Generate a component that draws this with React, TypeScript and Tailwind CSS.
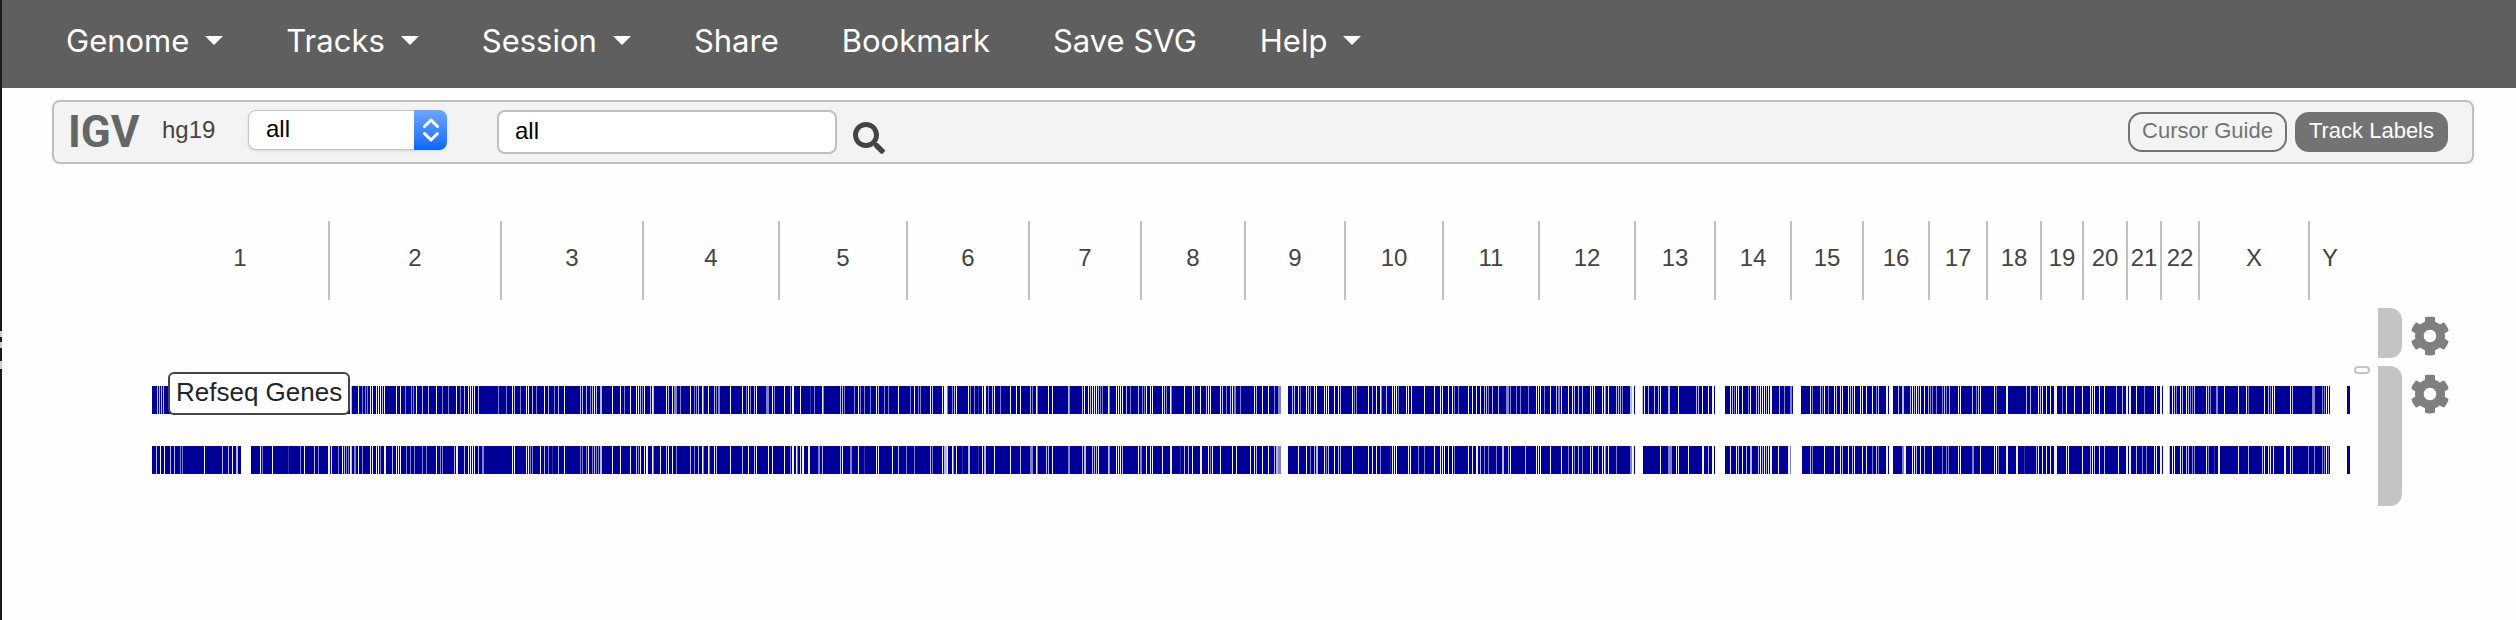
import { FaCog, FaSearch } from "react-icons/fa";

type Tile = [origin: number, marks: string];

const CHROMOSOMES: [name: string, span: number][] = [
  ["1", 178], ["2", 172], ["3", 142], ["4", 136], ["5", 128], ["6", 122],
  ["7", 112], ["8", 104], ["9", 100], ["10", 98], ["11", 96], ["12", 96],
  ["13", 80], ["14", 76], ["15", 72], ["16", 66], ["17", 58], ["18", 54],
  ["19", 42], ["20", 44], ["21", 34], ["22", 38], ["X", 110], ["Y", 40],
];

const AXIS_START = 152;
const AXIS_LENGTH = 2198;

// Gene deserts. Each mark is offset + strength (w, l, g, f) + optional width.
const STRENGTH: Record<string, number> = { w: 0.95, l: 0.72, g: 0.5, f: 0.2 };

const FORWARD: Tile[] = [
  [0, "157l 159l 161l 163l 350w 351l 358w 362g 365g 367g 370w 372w 376w 378w 380w 382l 384w 396w 400w 405g 411g 413g 416w 422l 428l 436w 442g 448g 456w 460g 464l 468w 470w 472w 474w 478l 498g"],
  [500, "6g 12w 14l 20g 26w 28w 32l 36g 44w 48l 54g 58l 64w 80l 82l 86l 90g 92l 94w 96l 100l2 112w 120w 124g 130w 136w 138w 140l 142g 144w 150l 152w 153l 166w 168l 172w 174g3 180g 190w 194g 196g 198l 202w 203g 208w 214l 216g 218g2 230w 242w 246g 248w 250g 254l 256w 266g3 272w 274g 284w 290g 292w2 300w 310f 314g 322w 323g 340l 342l 344g 354g 358w 360g 364g 370g 376w 378l 384g 388g 398w 410g 414w 418g 420g 430w 432l 442w 444w3 447g 452g 454l 456w 468w 470g 474g 478f 482w 484w2 488g 492l 494w"],
  [1000, "0g 10w 16w 20w 30l 32g 36w 37g 48w 52w 68l 69g 82l 84w 88w 90l 92w 94w 96w 98l 100g 102g 108w 109g 116w 118w"],
  [1100, "20w 22w 26l 30g 38l 42g 44g 46w 50w 52w 62w 64l 66g 70w 71g 84w 92w 94l 100w 106l 108w 110w 120w 122l 126g 130l 132w 134g2 140g 154w 156l 162w 168w 174g 178g3 181w7 192l 194l 198w 200g 206w 208l 210g 214w 216w 224w 226w 228w 234w 238w 240l 252w 254g 256g 268w 272l 276w 280w 281g 286l 292w 294w 296w 298g 306w 308w 311w 324w 334w 340w 342w 348w 352w 354g 358g 368w 372w 376w 380w 384l 386l 388g 392l 398l 406g3 410g 416g 420g 428g 436w 438w 440w 444g 450w 456l 458g2 461w 468w 472w 474l 478l 482l 490w 492w 494w"],
  [1600, "2w 4w 5g 8w 16l 18l 20l 22g 30l2 32w2 35w7 42l 44w 48l 54l 58l 60w 68l2 78w 96l 98l 102w 108w 112w2 115w10 130w 132l 134g 136w 138w 142w 148g 150w 156l 158l 160w 162w 164w 166l 168w 170w2 179l 184g 190g2 193w8 210w 212g 220l 222g 224w 228g 234w 236l 240w 242w 248w 250l 252l 254w 260w 262w 266w 272w 276g 278l 286w2 289w4 298l 302l2 310l 312w 314l 316w 318l 320w 324w 328l 330g 332g 336g 342g 344l 346g 349l 358w 360w 372l 376g 378l 380w 394w 396g 406w2 426l 430l 438w 440l 442w 446w 450w 454w3 462g 466w 474w 482w 490w 492w 494w 499w"],
  [2080, "24w 36l 42l 46w2 49w2 56w 64g 74w 76w 80w2 83w6 89l 92w 94l 96g 100w 102l 106w 108l 110g 112g 114l 126w 128l 130g 136g2 144w 158w 166w 168g 184w 188l 190g 192w 194w 210w 212l 232g2 234g 242g 244g 246w 248w 250w17"],
];

const REVERSE: Tile[] = [
  [0, "156l 160w 164w 170l 174l 180g 182g 204w 222l 228l 232w 236l2 241w10 260w 262g 272w 288f 300g 304w 314l 318g 328w2 331w 338g 342w 344l 346g 348g 350w 351l 354g2 358w 362g 370w 372w 376w 378w 380g 384w2 392l 396w 398w 400w 406g 410g 414g 422g 426g 436w 440g 442g 454l 456w2 464l 468w 470w 472w 474w 478l 482g2"],
  [500, "12w 14w 26w 28w 30g 32g 40w 44l 48g 52f 58l 64w 80g 82g 86g 88w 92g 94l 96g 98g 100l2 112w 120w 130w 136l 138g 140w 144w 146w2 152w 153g 160w 166l 168w 172w 176g 190l 194g 198l 202w 203g 208w 209g 214w 216l 230w 242l 248w 254l 256w 268w 272w 284w 290g 292w2 296w 297g 300w 302w2 308w2 318g2 322l 340l 342w 350g2 358w 364f 376w 378w 392w 398l 406g 414g 430l 432g 442w 444l3 447w 452w 453g 456w 462f 468l2 478f 482w 484l2 494w"],
  [1000, "10w 20l 30g3 36w 37g 46l 48l 52w 68g 69g 82l 84l2 92l 94l 96l 98w 108l 109g 116w 118w"],
  [1100, "20w 22l 38w 40g2 46w 50w 52w 62w 70w2 80f 84l 88l 92w 100w2 108w 110g 112w 120w 132w 136w 150w 154w 156l 162w 168w 174l 176l2 178g3 181w7 198w 206w 210g 214l 216l2 224w 226g 228l 234w 238l 240l 252w 268w 272w 276w 280g 290f 292w 294w 296w 308w 310w 318g 324g 334w 340w 342w 344w 348w 352w 354g 368w 372w 376w2 380l 384g 388g 396g 402l2 408l 410w 425l 436w 438w 440w 450w 461w 468g 472w 474g 478l 482g 490w 492w 498l"],
  [1600, "2w 4w 5g 8w 16g 30g2 32w2 35w8 60w 68g4 76w 78w 88w 102w2 108l 112w2 115w10 130w 136w 138l 142w 146l 150l2 158l 160w 162l 164w 166l 168w 170w2 178w 188w2 190g 191w11 210l 212g 224w 234w 240w 242l 248w 252l 254w 262w 266w 272g 276l 278g 286w2 289w4 302g2 304w2 312w 314w 316l 320w 324l 332w 342g 346g 348g 358w 360w 372g2 380w 394w 396w 398g 406w2 416w2 424f 436l 438w 442w 446w 450w 454w3 466w 468w 482w 490l 492w 494l 499w"],
  [2080, "24l 38w 46w2 49w2 56l 62g 66g 74w 76w 80w2 83w6 89l 92w 94w 100w 102l 106l 108l 112g 114g 126w 128g 134f 138w2 158w 168l 182l 184w 188w 190w 193w 204w2 210w 212l 228g 234g 242g 244g 246w 248g 250w17"],
];

function Caret() {
  return (
    <svg viewBox="0 0 18 9" className="mb-[2px] h-[9px] w-[18px] fill-white" aria-hidden="true">
      <path d="M0 0h18L9 9z" />
    </svg>
  );
}

function MenuItem({ label, menu }: { label: string; menu?: boolean }) {
  return (
    <button type="button" className="flex items-center gap-4 whitespace-nowrap font-['Inter',sans-serif] text-[31px] leading-10 text-white">
      {label}
      {menu && <Caret />}
    </button>
  );
}

function GeneRow({ tiles }: { tiles: Tile[] }) {
  return (
    <svg
      viewBox={`${AXIS_START} 0 ${AXIS_LENGTH} 28`}
      preserveAspectRatio="none"
      shapeRendering="crispEdges"
      className="block h-7 w-full"
      aria-hidden="true"
    >
      <rect x={AXIS_START} width={AXIS_LENGTH} height="28" fill="#000096" />
      {tiles.flatMap(([origin, marks]) =>
        marks.split(" ").map((mark) => {
          const [, offset, strength, width] = /^(\d+)([wlgf])(\d*)$/.exec(mark)!;
          return (
            <rect
              key={`${origin}-${mark}`}
              x={origin + Number(offset)}
              width={Number(width || 1)}
              height="28"
              fill="#fff"
              opacity={Number(width) > 3 && strength === "w" ? 1 : STRENGTH[strength]}
            />
          );
        }),
      )}
    </svg>
  );
}

function TrackControls({ label }: { label: string }) {
  return (
    <>
      <div className="w-6 self-stretch rounded-r-xl bg-[#c4c4c4]" />
      <button type="button" aria-label={label} className="ml-2 mt-2 self-start text-[#7f7f7f]">
        <FaCog size={40} />
      </button>
    </>
  );
}

export default function App() {
  return (
    <div className="relative min-h-screen border-l-2 border-[#1a1a1a] bg-[#fefefe] font-['Liberation_Sans',Arial,sans-serif]">
      <div className="absolute -left-[2px] top-[331px] flex flex-col gap-[5px]" aria-hidden="true">
        <div className="h-[6px] w-[2px] bg-[#cccccc]" />
        <div className="h-[6px] w-[2px] bg-[#cccccc]" />
        <div className="mt-2 h-2 w-[2px] bg-[#cccccc]" />
      </div>

      <nav className="flex h-[88px] items-start gap-[63px] bg-[#5f5f5f] pl-16 pt-[21px]">
        <MenuItem label="Genome" menu />
        <MenuItem label="Tracks" menu />
        <MenuItem label="Session" menu />
        <MenuItem label="Share" />
        <MenuItem label="Bookmark" />
        <MenuItem label="Save SVG" />
        <MenuItem label="Help" menu />
      </nav>

      <div className="ml-[50px] mr-[42px] mt-3 flex h-16 items-start rounded-lg border-2 border-[#bfbfbf] bg-[#f3f3f3] pr-6 pt-2 text-2xl">
        <span className="w-[108px] pl-[14px] font-['Roboto',sans-serif] text-[44px] font-bold leading-[44px] text-[#666666]">
          IGV
        </span>
        <span className="w-[86px] leading-10 text-[#444444]">hg19</span>
        <div className="relative mr-[50px]">
          <select
            aria-label="Chromosome"
            defaultValue="all"
            className="block h-10 w-[199px] appearance-none rounded-lg border border-[#c6c6c6] bg-white pb-[2px] pl-[17px] text-black shadow-sm"
          >
            <option value="all">all</option>
          </select>
          <div className="pointer-events-none absolute right-0 top-0 flex h-10 w-[33px] items-center justify-center rounded-r-lg bg-linear-to-b from-[#6ea6fb] to-[#0566ff]">
            <svg viewBox="0 0 16 24" className="h-6 w-4 fill-none stroke-white stroke-3" aria-hidden="true">
              <path d="M1.500 8.500 8 2l6.500 6.500M1.500 15.500 8 22l6.500-6.500" strokeLinecap="round" strokeLinejoin="round" />
            </svg>
          </div>
        </div>
        <input
          type="text"
          aria-label="Locus search"
          defaultValue="all"
          className="h-11 w-[340px] rounded-lg border-2 border-[#bfbfbf] bg-white pb-[2px] pl-4 text-black"
        />
        <button type="button" aria-label="Search" className="ml-4 mt-3 text-[#444444]">
          <FaSearch size={32} />
        </button>
        <div className="ml-auto flex gap-2 text-[22px]">
          <button type="button" className="mt-[2px] h-10 rounded-[14px] border-2 border-[#737373] px-3 pb-[2px] leading-8 text-[#737373]">
            Cursor Guide
          </button>
          <button type="button" className="mt-[2px] h-10 rounded-[14px] border-2 border-[#737373] bg-[#737373] px-3 pb-[2px] leading-8 text-white">
            Track Labels
          </button>
        </div>
      </div>

      <main className="mr-16 pl-[150px] pt-[57px]">
        <div
          className="mr-[102px] grid h-[79px] text-2xl text-[#444444]"
          style={{ gridTemplateColumns: CHROMOSOMES.map(([, span]) => `minmax(0, ${span}fr)`).join(" ") }}
        >
          {CHROMOSOMES.map(([name]) => (
            <div key={name} className="flex items-center justify-center border-r-2 border-[#bfbfbf] pb-[6px] last:border-r-0">
              {name}
            </div>
          ))}
        </div>

        <section className="mt-2 flex h-[50px]" aria-label="Ruler">
          <div className="mr-7 flex-1" />
          <TrackControls label="Ruler settings" />
          <div className="w-[2px]" />
        </section>

        <section className="mt-2 flex h-[140px]" aria-label="Refseq Genes">
          <div className="relative flex flex-1 flex-col gap-8 pt-5">
            <GeneRow tiles={FORWARD} />
            <GeneRow tiles={REVERSE} />
            <div className="absolute left-4 top-[6px] h-[43px] whitespace-nowrap rounded-md border-2 border-[#444444] bg-white px-[6px] text-[26px] leading-9 text-[#212529]">
              Refseq Genes
            </div>
          </div>
          <div className="ml-1 mr-2 h-2 w-4 rounded-full border-2 border-[#c4c4c4]" />
          <TrackControls label="Refseq Genes settings" />
          <div className="w-[2px]" />
        </section>
      </main>
    </div>
  );
}
